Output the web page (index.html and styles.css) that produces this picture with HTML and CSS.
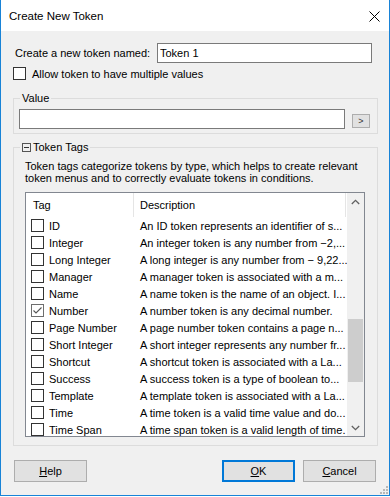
FILE: index.html
```html
<!DOCTYPE html>
<html lang="en">
<head>
  <meta charset="UTF-8" />
  <title>Create New Token</title>
  <link rel="stylesheet" href="styles.css">
</head>
<body>

  <div class="dialog">
    <!-- Titelrad -->
    <div class="titlebar">
      <span class="title">Create New Token</span>
      <svg class="close" width="11" height="11" viewBox="0 0 11 11"><path d="M0.5 0.5L10.5 10.5M10.5 0.5L0.5 10.5" stroke="#000" stroke-width="1"/></svg>
    </div>

    <div class="content">
      <div class="name-row">
        <label for="token-name">Create a new token named:</label>
        <input id="token-name" type="text" value="Token 1">
      </div>

      <div class="check-row">
        <span class="check"></span>
        <span>Allow token to have multiple values</span>
      </div>

      <fieldset class="group">
        <legend>Value</legend>
        <div class="value-row">
          <input type="text" class="value-input">
          <button class="more-btn">&gt;</button>
        </div>
      </fieldset>

      <fieldset class="group tags-group">
        <legend><span class="collapse"></span>Token Tags</legend>
        <p class="tags-help">Token tags categorize tokens by type, which helps to create relevant token menus and to correctly evaluate tokens in conditions.</p>

        <div class="list">
          <div class="list-main">
            <div class="list-head">
              <div class="head-tag">Tag</div>
              <div class="head-desc">Description</div>
            </div>
            <div class="list-body">
              <div class="row"><span class="tag"><span class="check"></span>ID</span><span class="desc">An ID token represents an identifier of s...</span></div>
              <div class="row"><span class="tag"><span class="check"></span>Integer</span><span class="desc">An integer token is any number from −2,...</span></div>
              <div class="row"><span class="tag"><span class="check"></span>Long Integer</span><span class="desc">A long integer is any number from − 9,22...</span></div>
              <div class="row"><span class="tag"><span class="check"></span>Manager</span><span class="desc">A manager token is associated with a m...</span></div>
              <div class="row"><span class="tag"><span class="check"></span>Name</span><span class="desc">A name token is the name of an object. I...</span></div>
              <div class="row"><span class="tag"><span class="check checked"><svg width="11" height="11" viewBox="0 0 11 11"><path d="M1.5 5.5L4 8L9.5 2.5" fill="none" stroke="#555" stroke-width="1.1"/></svg></span>Number</span><span class="desc">A number token is any decimal number.</span></div>
              <div class="row"><span class="tag"><span class="check"></span>Page Number</span><span class="desc">A page number token contains a page n...</span></div>
              <div class="row"><span class="tag"><span class="check"></span>Short Integer</span><span class="desc">A short integer represents any number fr...</span></div>
              <div class="row"><span class="tag"><span class="check"></span>Shortcut</span><span class="desc">A shortcut token is associated with a La...</span></div>
              <div class="row"><span class="tag"><span class="check"></span>Success</span><span class="desc">A success token is a type of boolean to...</span></div>
              <div class="row"><span class="tag"><span class="check"></span>Template</span><span class="desc">A template token is associated with a La...</span></div>
              <div class="row"><span class="tag"><span class="check"></span>Time</span><span class="desc">A time token is a valid time value and do...</span></div>
              <div class="row"><span class="tag"><span class="check"></span>Time Span</span><span class="desc">A time span token is a valid length of time.</span></div>
            </div>
          </div>

          <div class="scrollbar">
            <div class="arrow">
              <svg width="9" height="6" viewBox="0 0 9 6"><path d="M0.8 5L4.5 1.3L8.2 5" fill="none" stroke="#606060" stroke-width="1.3"/></svg>
            </div>
            <div class="track"><div class="thumb"></div></div>
            <div class="arrow">
              <svg width="9" height="6" viewBox="0 0 9 6"><path d="M0.8 1L4.5 4.7L8.2 1" fill="none" stroke="#606060" stroke-width="1.3"/></svg>
            </div>
          </div>
        </div>
      </fieldset>

      <!-- Knappar -->
      <div class="buttons">
        <button class="btn"><u>H</u>elp</button>
        <span class="spacer"></span>
        <button class="btn btn-default"><u>O</u>K</button>
        <button class="btn"><u>C</u>ancel</button>
      </div>
    </div>

    <svg class="grip" width="10" height="10" viewBox="0 0 10 10">
      <rect x="8" y="2" width="2" height="2" fill="#b8b8b8"/>
      <rect x="5" y="5" width="2" height="2" fill="#b8b8b8"/>
      <rect x="8" y="5" width="2" height="2" fill="#b8b8b8"/>
      <rect x="2" y="8" width="2" height="2" fill="#b8b8b8"/>
      <rect x="5" y="8" width="2" height="2" fill="#b8b8b8"/>
      <rect x="8" y="8" width="2" height="2" fill="#b8b8b8"/>
    </svg>
  </div>

</body>
</html>
```

FILE: styles.css
```css
body {
  margin: 0;
  background-color: #ffffff;
  font-family: 'Liberation Sans', Arial, sans-serif;
  font-size: 11px;
  color: #000000;
}

.dialog {
  position: relative;
  width: 390px;
  height: 496px;
  box-sizing: border-box;
  border: 1px solid #1883d7;
  border-top: none;
  display: flex;
  flex-direction: column;
}

.titlebar {
  height: 31px;
  background-color: #ffffff;
  display: flex;
  align-items: center;
  justify-content: space-between;
  padding: 0 9px 0 8px;
}

.title {
  font-size: 11.5px;
  margin-top: 1px;
}

.close {
  display: block;
  margin-top: 1px;
}

.content {
  flex: 1;
  background-color: #f0f0f0;
  padding: 12px 11px 0 12px;
}

.name-row {
  display: flex;
  align-items: center;
  height: 20px;
  padding-left: 2px;
}

.name-row label {
  flex: 1;
}

.name-row input {
  width: 215px;
  height: 20px;
  box-sizing: border-box;
  margin: 0 6px 0 0;
  border: 1px solid #7a7a7a;
  padding: 0 2px;
  font-family: inherit;
  font-size: 11px;
  background-color: #ffffff;
  outline: none;
}

.check-row {
  display: flex;
  align-items: center;
  gap: 6px;
  margin-top: 4px;
  height: 13px;
}

.check {
  display: inline-block;
  width: 13px;
  height: 13px;
  box-sizing: border-box;
  border: 1px solid #333333;
  background-color: #ffffff;
  flex-shrink: 0;
}

.check.checked {
  border-color: #6e6e6e;
}

.check svg {
  display: block;
}

.group {
  margin: 11px 0 0 0;
  padding: 0;
  border: 1px solid #dcdcdc;
  min-width: 0;
}

.group legend {
  margin-left: 6px;
  padding: 0 2px;
  line-height: 14px;
  display: flex;
  align-items: center;
}

.value-row {
  display: flex;
  align-items: flex-end;
  margin: 4px 7px 4px 5px;
}

.value-input {
  width: 326px;
  height: 20px;
  box-sizing: border-box;
  margin: 0;
  border: 1px solid #7a7a7a;
  background-color: #ffffff;
  outline: none;
}

.more-btn {
  width: 18px;
  height: 14px;
  margin: 0 0 1px auto;
  padding: 0;
  border: 1px solid #adadad;
  background-color: #e1e1e1;
  font-family: inherit;
  font-size: 9px;
  line-height: 12px;
  color: #333333;
}

.tags-group {
  margin-top: 6px;
}

.collapse {
  width: 9px;
  height: 9px;
  box-sizing: border-box;
  border: 1px solid #555555;
  margin-right: 2px;
  background: linear-gradient(#333333, #333333) center / 5px 1px no-repeat;
}

.tags-help {
  margin: 6px 11px 0 11px;
  line-height: 12px;
}

.list {
  margin: 8px 12px 8px 11px;
  height: 245px;
  box-sizing: border-box;
  border: 1px solid #828790;
  background-color: #ffffff;
  display: flex;
  overflow: hidden;
}

.list-main {
  flex: 1;
  overflow: hidden;
}

.list-head {
  display: grid;
  grid-template-columns: 108px 212px;
  height: 24px;
}

.head-tag,
.head-desc {
  border-right: 1px solid #e5e5e5;
  display: flex;
  align-items: center;
}

.head-tag {
  padding-left: 7px;
}

.head-desc {
  padding-left: 6px;
}

.list-body {
  overflow: hidden;
}

.row {
  display: grid;
  grid-template-columns: 108px 1fr;
  height: 17px;
  align-items: center;
}

.tag {
  display: flex;
  align-items: center;
  gap: 5px;
  padding-left: 5px;
  white-space: nowrap;
}

.desc {
  padding-left: 6px;
  white-space: nowrap;
  overflow: hidden;
}

.scrollbar {
  width: 17px;
  background-color: #f0f0f0;
  display: flex;
  flex-direction: column;
}

.arrow {
  height: 17px;
  display: flex;
  align-items: center;
  justify-content: center;
}

.arrow svg {
  display: block;
}

.track {
  flex: 1;
}

.thumb {
  margin: 109px 1px 0 1px;
  height: 63px;
  background-color: #cdcdcd;
}

.buttons {
  display: flex;
  gap: 8px;
  margin: 14px 2px 0 1px;
}

.spacer {
  flex: 1;
}

.btn {
  width: 73px;
  height: 22px;
  margin: 0;
  padding: 0;
  border: 1px solid #adadad;
  background-color: #e1e1e1;
  font-family: inherit;
  font-size: 11px;
  color: #000000;
}

.btn-default {
  border: 2px solid #0078d7;
}

.grip {
  position: absolute;
  right: 1px;
  bottom: 1px;
}
```
